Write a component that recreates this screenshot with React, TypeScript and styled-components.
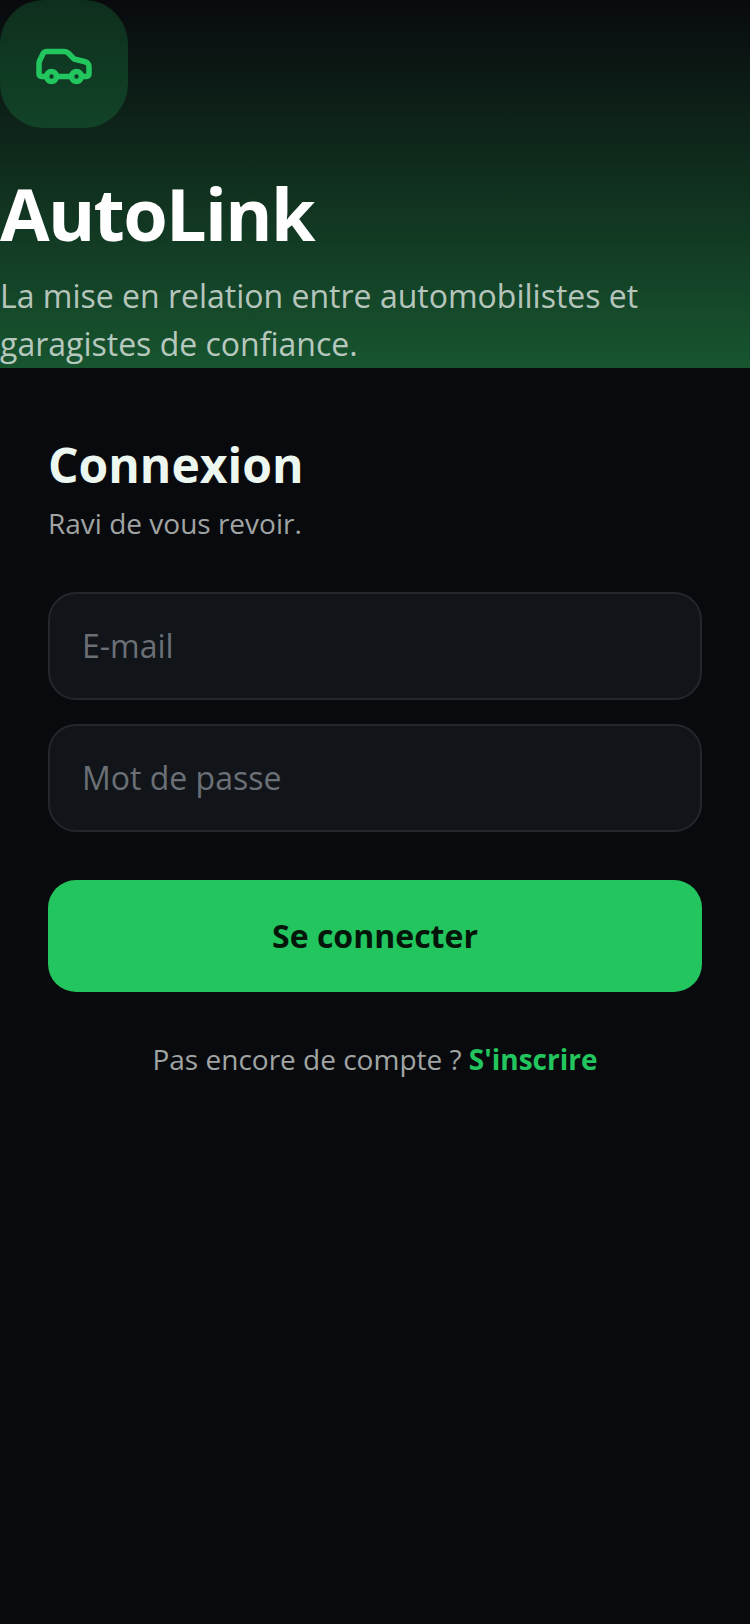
import styled, { createGlobalStyle } from 'styled-components'
import { Car } from 'lucide-react'

const GlobalStyles = createGlobalStyle`
  html, body {
    margin: 0;
    background: #090a0e;
  }
  * {
    box-sizing: border-box;
  }
`

const Page = styled.div`
  width: 750px;
  min-height: 1624px;
  background: #090a0e;
  font-family: "Open Sans", sans-serif;
  display: flex;
  flex-direction: column;
`

const Hero = styled.header`
  height: 368px;
  overflow: hidden;
  background: linear-gradient(180deg, #090a0e 0%, #17552f 100%);
`

const LogoTile = styled.div`
  width: 128px;
  height: 128px;
  border-radius: 44px;
  background: rgba(34, 197, 94, 0.2);
  color: #22c55e;
  display: flex;
  align-items: center;
  justify-content: center;
`

const Brand = styled.h1`
  margin: 41px 0 0;
  font-size: 72px;
  line-height: 88px;
  font-weight: 700;
  letter-spacing: -1.7px;
  color: #ffffff;
`

const Tagline = styled.p`
  margin: 15px 0 0;
  font-size: 32px;
  line-height: 48px;
  color: rgba(255, 255, 255, 0.7);
`

const Card = styled.main`
  padding: 69px 48px 0;
  display: flex;
  flex-direction: column;
`

const Heading = styled.h2`
  margin: 0;
  font-size: 48px;
  line-height: 56px;
  font-weight: 700;
  color: #ecf7f0;
`

const Subheading = styled.p`
  margin: 12px 0 0;
  font-size: 28px;
  line-height: 36px;
  color: #a0a5a4;
`

const Fields = styled.form`
  margin-top: 51px;
  display: flex;
  flex-direction: column;
  gap: 24px;
`

const Input = styled.input`
  width: 100%;
  height: 108px;
  padding: 0 32px 2px;
  border: 2px solid #23272d;
  border-radius: 28px;
  background: #11151a;
  color: #ffffff;
  font-family: inherit;
  font-size: 32px;
  outline: none;

  &::placeholder {
    color: #6b7076;
    opacity: 1;
  }
`

const Submit = styled.button`
  margin-top: 24px;
  width: 100%;
  height: 112px;
  padding: 0 0 2px;
  border: none;
  border-radius: 28px;
  background: #22c55e;
  color: #04150a;
  font-family: inherit;
  font-size: 32px;
  font-weight: 700;
`

const Footer = styled.p`
  margin: 48px 0 0;
  text-align: center;
  font-size: 28px;
  line-height: 38px;
  color: #a0a5a4;
`

const SignUp = styled.a`
  color: #22c55e;
  font-weight: 700;
  text-decoration: none;
`

export default function App() {
  return (
    <Page>
      <GlobalStyles />
      <Hero>
        <LogoTile>
          <Car size={60} strokeWidth={2.2} />
        </LogoTile>
        <Brand>AutoLink</Brand>
        <Tagline>La mise en relation entre automobilistes et garagistes de confiance.</Tagline>
      </Hero>
      <Card>
        <Heading>Connexion</Heading>
        <Subheading>Ravi de vous revoir.</Subheading>
        <Fields onSubmit={(e) => e.preventDefault()}>
          <Input type="email" placeholder="E-mail" />
          <Input type="password" placeholder="Mot de passe" />
          <Submit type="submit">Se connecter</Submit>
        </Fields>
        <Footer>
          Pas encore de compte ? <SignUp href="#">S'inscrire</SignUp>
        </Footer>
      </Card>
    </Page>
  )
}
